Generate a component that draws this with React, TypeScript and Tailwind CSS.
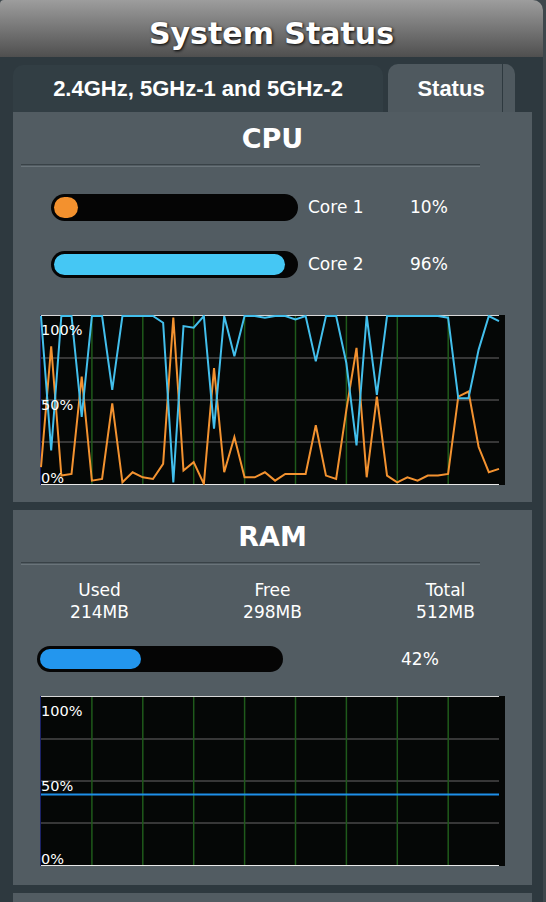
import React from 'react';

const cpuCore1 = [10, 82, 5, 6, 64, 2, 3, 48, 1, 7, 4, 3, 12, 99, 8, 13, 0, 69, 7, 28, 4, 4, 7, 2, 6, 6, 6, 35, 5, 3, 44, 81, 4, 52, 5, 1, 4, 2, 5, 5, 6, 52, 55, 22, 7, 9];
const cpuCore2 = [100, 20, 100, 100, 40, 100, 100, 56, 100, 100, 100, 100, 96, 1, 94, 93, 100, 33, 100, 76, 100, 100, 99, 100, 100, 98, 100, 73, 100, 100, 72, 23, 100, 53, 100, 100, 100, 100, 100, 100, 99, 51, 51, 80, 100, 97];
const ramHistory = Array.from({ length: 46 }, () => 42);

type Series = { color: string; data: number[] };

const W = 465;
const H = 170;
const X0 = 1;
const X1 = 459;
const TOP = 1;
const BOTTOM = 169;

function yOf(v: number) {
  return TOP + (1 - v / 100) * (BOTTOM - TOP);
}

function Chart({ series }: { series: Series[] }) {
  const step = (X1 - X0) / 45;
  return (
    <svg width={W} height={H} className="block">
      <rect width={W} height={H} fill="#050706" />
      {[1, 2, 3].map((k) => (
        <line key={k} x1={X0} x2={X1} y1={TOP + (k * (BOTTOM - TOP)) / 4} y2={TOP + (k * (BOTTOM - TOP)) / 4} stroke="#484848" strokeWidth={1.5} />
      ))}
      {[1, 2, 3, 4, 5, 6, 7, 8].map((k) => (
        <line key={k} x1={X0 + k * 50.9} x2={X0 + k * 50.9} y1={TOP} y2={BOTTOM} stroke="#1f5a1b" strokeWidth={1.5} />
      ))}
      <line x1={X0} x2={X1} y1={0.5} y2={0.5} stroke="#d8d8d8" strokeWidth={1} />
      <line x1={X0} x2={X1} y1={169.5} y2={169.5} stroke="#e8e8e8" strokeWidth={1} />
      <line x1={0.5} x2={0.5} y1={0} y2={H} stroke="#1c2266" strokeWidth={1} />
      {series.map((s, i) => (
        <polyline
          key={i}
          fill="none"
          stroke={s.color}
          strokeWidth={2}
          strokeLinejoin="miter"
          points={s.data.map((v, j) => `${X0 + j * step},${yOf(v)}`).join(' ')}
        />
      ))}
      <g fill="#ffffff" fontSize={14.5} fontFamily="'DejaVu Sans', sans-serif">
        <text x={1} y={19.5}>100%</text>
        <text x={1} y={94.5}>50%</text>
        <text x={1} y={167.5}>0%</text>
      </g>
    </svg>
  );
}

function Bar({ pct, width, height, fill }: { pct: number; width: string; height: string; fill: string }) {
  return (
    <div className={`${width} ${height} rounded-full bg-[#050505] p-[3px]`}>
      <div className={`h-full rounded-full ${fill}`} style={{ width: `${pct}%` }} />
    </div>
  );
}

function SectionTitle({ children }: { children: React.ReactNode }) {
  return (
    <>
      <div className="flex h-[52px] items-center justify-center text-[27px] leading-none font-bold text-white">
        {children}
      </div>
      <div className="ml-[8px] h-[3px] w-[459px] border-t border-b border-t-[#394247] border-b-[#6a747a]" />
    </>
  );
}

export default function App() {
  return (
    <div className="w-[546px] bg-[#3e474c] font-['DejaVu_Sans',sans-serif] text-white">
      <div className="w-[543px] overflow-hidden rounded-tl-[4px] rounded-tr-[10px] bg-[#2e393f]">
        {/* header */}
        <div className="flex h-[57px] items-center justify-center bg-[linear-gradient(to_bottom,#9d9d9d,#4f4f4f)] pt-[10px] text-[30px] leading-none font-bold [text-shadow:1px_1px_3px_#000]">
          System Status
        </div>

        {/* tabs */}
        <div className="flex h-[55px] items-end gap-[5px] pl-[13px] font-['Liberation_Sans',Arial,sans-serif] text-[22px] leading-none font-bold">
          <div className="flex h-[47px] w-[370px] items-center justify-center rounded-t-[10px] bg-[#323e44]">
            2.4GHz, 5GHz-1 and 5GHz-2
          </div>
          <div className="flex h-[48px] w-[127px] rounded-t-[10px] bg-[#4f595f]">
            <div className="flex w-[115px] items-center justify-center border-r border-[#2e393f] pl-[12px] pt-[2px]">
              Status
            </div>
            <div className="w-[12px]" />
          </div>
        </div>

        <div className="flex w-[532px] flex-col gap-[8px] pl-[13px]">
          {/* CPU */}
          <div className="h-[390px] bg-[#525c62]">
            <SectionTitle>CPU</SectionTitle>
            <div className="mt-[27px] flex items-center pl-[38px] text-[17px] leading-none">
              <Bar pct={10} width="w-[247px]" height="h-[27px]" fill="bg-[#f3912e]" />
              <span className="ml-[10px] w-[102px]">Core 1</span>
              <span>10%</span>
            </div>
            <div className="mt-[30px] flex items-center pl-[38px] text-[17px] leading-none">
              <Bar pct={96} width="w-[247px]" height="h-[27px]" fill="bg-[#45c7f4]" />
              <span className="ml-[10px] w-[102px]">Core 2</span>
              <span>96%</span>
            </div>
            <div className="mt-[37px] pl-[27px]">
              <Chart
                series={[
                  { color: '#f39230', data: cpuCore1 },
                  { color: '#43bfec', data: cpuCore2 },
                ]}
              />
            </div>
          </div>

          {/* RAM */}
          <div className="h-[375px] bg-[#525c62]">
            <SectionTitle>RAM</SectionTitle>
            <div className="mt-[14px] grid grid-cols-3 text-center text-[17px] leading-[22px]">
              <div>
                <div>Used</div>
                <div>214MB</div>
              </div>
              <div>
                <div>Free</div>
                <div>298MB</div>
              </div>
              <div>
                <div>Total</div>
                <div>512MB</div>
              </div>
            </div>
            <div className="mt-[23px] flex items-center pl-[24px] text-[17px] leading-none">
              <Bar pct={42} width="w-[246px]" height="h-[26px]" fill="bg-[#2396ee]" />
              <span className="ml-[118px]">42%</span>
            </div>
            <div className="mt-[24px] pl-[27px]">
              <Chart series={[{ color: '#1e8fe8', data: ramHistory }]} />
            </div>
          </div>

          <div className="h-[9px] bg-[#525c62]" />
        </div>
      </div>
    </div>
  );
}
